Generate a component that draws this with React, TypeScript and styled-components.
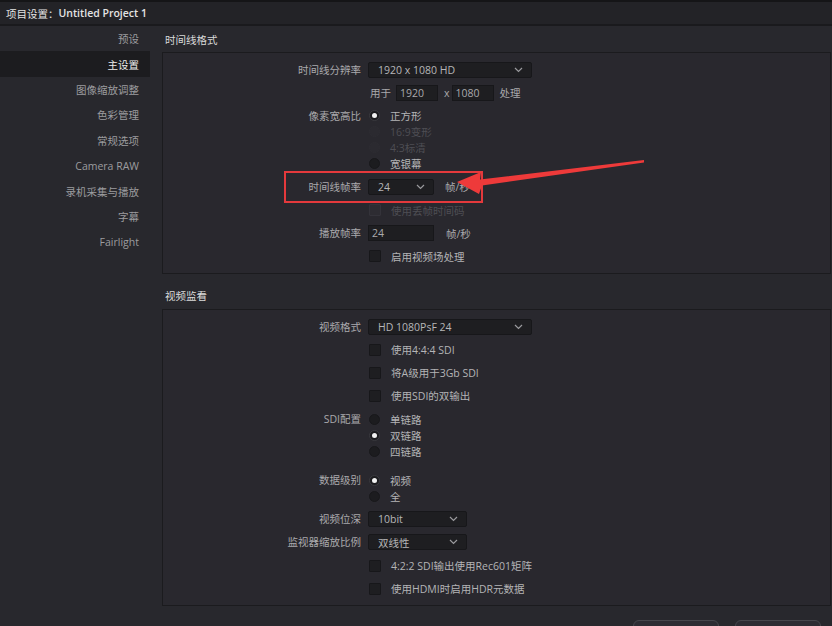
import styled, { createGlobalStyle } from "styled-components";

const GlobalStyle = createGlobalStyle`
  html, body {
    margin: 0;
    padding: 0;
    background: #28282d;
  }
  * {
    box-sizing: border-box;
  }
`;

const FONT = `"Open Sans", "Noto Sans CJK SC", "Noto Sans", sans-serif`;

const navItems = [
  "预设",
  "主设置",
  "图像缩放调整",
  "色彩管理",
  "常规选项",
  "Camera RAW",
  "录机采集与播放",
  "字幕",
  "Fairlight",
];

function Chevron() {
  return (
    <svg width="9" height="6" viewBox="0 0 9 6">
      <path d="M1 1 L4.5 4.5 L8 1" fill="none" stroke="#9a9a9e" strokeWidth="1.2" />
    </svg>
  );
}

function Select({ value, width }: { value: string; width: number }) {
  return (
    <SelectBox $width={width}>
      <span>{value}</span>
      <Chevron />
    </SelectBox>
  );
}

function Radio({ checked, disabled, label }: { checked?: boolean; disabled?: boolean; label: string }) {
  return (
    <OptionRow>
      <RadioDot $checked={checked} $disabled={disabled} />
      <OptionText $disabled={disabled}>{label}</OptionText>
    </OptionRow>
  );
}

function CheckRow({ label, disabled }: { label: string; disabled?: boolean }) {
  return (
    <Row>
      <Label />
      <OptionRow>
        <CheckBox $disabled={disabled} />
        <OptionText $disabled={disabled}>{label}</OptionText>
      </OptionRow>
    </Row>
  );
}

function App() {
  return (
    <Window>
      <GlobalStyle />
      <TitleBar>
        <TitlePrefix>项目设置：</TitlePrefix>Untitled Project 1
      </TitleBar>
      <Body>
        <Sidebar>
          {navItems.map((item) => (
            <NavItem key={item} $active={item === "主设置"}>
              {item}
            </NavItem>
          ))}
        </Sidebar>

        <Main>
          <SectionTitle>时间线格式</SectionTitle>
          <Panel>
            <Row>
              <Label>时间线分辨率</Label>
              <Select value="1920 x 1080 HD" width={164} />
            </Row>
            <Row>
              <Label />
              <Inline>
                <Text>用于</Text>
                <Field $width={42} $ml={5}>1920</Field>
                <Text $ml={6}>x</Text>
                <Field $width={42} $ml={2}>1080</Field>
                <Text $ml={6}>处理</Text>
              </Inline>
            </Row>
            <Group>
              <Label>像素宽高比</Label>
              <Options>
                <Radio checked label="正方形" />
                <Radio disabled label="16:9变形" />
                <Radio disabled label="4:3标清" />
                <Radio label="宽银幕" />
              </Options>
            </Group>
            <Row>
              <Label>时间线帧率</Label>
              <Select value="24" width={66} />
              <Text $ml={11}>帧/秒</Text>
            </Row>
            <CheckRow label="使用丢帧时间码" disabled />
            <Row>
              <Label>播放帧率</Label>
              <Field $width={66}>24</Field>
              <Text $ml={12}>帧/秒</Text>
            </Row>
            <CheckRow label="启用视频场处理" />
          </Panel>

          <SectionTitle $spaced>视频监看</SectionTitle>
          <Panel>
            <Row>
              <Label>视频格式</Label>
              <Select value="HD 1080PsF 24" width={164} />
            </Row>
            <CheckRow label="使用4:4:4 SDI" />
            <CheckRow label="将A级用于3Gb SDI" />
            <CheckRow label="使用SDI的双输出" />
            <Group>
              <Label>SDI配置</Label>
              <Options>
                <Radio label="单链路" />
                <Radio checked label="双链路" />
                <Radio label="四链路" />
              </Options>
            </Group>
            <Group $spaced>
              <Label>数据级别</Label>
              <Options>
                <Radio checked label="视频" />
                <Radio label="全" />
              </Options>
            </Group>
            <Row>
              <Label>视频位深</Label>
              <Select value="10bit" width={99} />
            </Row>
            <Row>
              <Label>监视器缩放比例</Label>
              <Select value="双线性" width={99} />
            </Row>
            <CheckRow label="4:2:2 SDI输出使用Rec601矩阵" />
            <CheckRow label="使用HDMI时启用HDR元数据" />
          </Panel>

          <Footer>
            <FooterButton />
            <FooterButton />
          </Footer>
        </Main>
      </Body>

      <Highlight />
      <Arrow width="832" height="626" viewBox="0 0 832 626">
        <polygon
          points="457,182 481,172 480,179.5 644,160 644,162.5 482,185.5 479,194"
          fill="#ee3a3a"
        />
      </Arrow>
    </Window>
  );
}

const Window = styled.div`
  position: relative;
  width: 832px;
  height: 626px;
  overflow: hidden;
  display: flex;
  flex-direction: column;
  background: #28282d;
  border-top: 2px solid #151517;
  font-family: ${FONT};
`;

const TitleBar = styled.div`
  height: 24px;
  flex-shrink: 0;
  display: flex;
  align-items: center;
  padding-left: 6px;
  background: #232327;
  border-bottom: 2px solid #1a1a1d;
  color: #e4e4e4;
  font-size: 10.5px;
  font-weight: 600;
`;

const TitlePrefix = styled.span`
  font-weight: 400;
`;

const Body = styled.div`
  flex: 1;
  display: flex;
  min-height: 0;
`;

const Sidebar = styled.div`
  width: 150px;
  flex-shrink: 0;
  display: flex;
  flex-direction: column;
`;

const NavItem = styled.div<{ $active?: boolean }>`
  height: 25.4px;
  display: flex;
  align-items: center;
  justify-content: flex-end;
  padding-right: 11px;
  font-size: 10.5px;
  color: ${(p) => (p.$active ? "#ececec" : "#9c9c9f")};
  background: ${(p) => (p.$active ? "#1c1c1f" : "transparent")};
`;

const Main = styled.div`
  flex: 1;
  display: flex;
  flex-direction: column;
  margin-left: 12px;
  margin-right: 1px;
`;

const SectionTitle = styled.div<{ $spaced?: boolean }>`
  height: 26px;
  flex-shrink: 0;
  display: flex;
  align-items: center;
  padding-left: 3px;
  margin-top: ${(p) => (p.$spaced ? "9px" : "0")};
  font-size: 10.5px;
  color: #dadada;
`;

const Panel = styled.div`
  flex-shrink: 0;
  border: 1px solid #1b1b1e;
  background: #29282e;
  padding: 5px 0 5px;
  display: flex;
  flex-direction: column;
`;

const Row = styled.div`
  height: 23.15px;
  display: flex;
  align-items: center;
`;

const Group = styled.div<{ $spaced?: boolean }>`
  display: flex;
  align-items: flex-start;
  padding: 3.55px 0;
  margin-top: ${(p) => (p.$spaced ? "6px" : "0")};
`;

const Label = styled.div`
  width: 198px;
  flex-shrink: 0;
  margin-right: 7px;
  height: 16px;
  line-height: 16px;
  text-align: right;
  font-size: 10.5px;
  color: #a9a9ac;
  white-space: nowrap;
`;

const Options = styled.div`
  display: flex;
  flex-direction: column;
`;

const OptionRow = styled.div`
  height: 16px;
  display: flex;
  align-items: center;
  padding-left: 1px;
`;

const OptionText = styled.span<{ $disabled?: boolean }>`
  margin-left: 10px;
  font-size: 10.5px;
  color: ${(p) => (p.$disabled ? "#4e4e54" : "#b4b4b6")};
  white-space: nowrap;
`;

const RadioDot = styled.span<{ $checked?: boolean; $disabled?: boolean }>`
  width: 11px;
  height: 11px;
  border-radius: 50%;
  flex-shrink: 0;
  display: flex;
  align-items: center;
  justify-content: center;
  background: ${(p) => (p.$disabled ? "#2b2a30" : "#1c1c1f")};
  border: 1px solid ${(p) => (p.$disabled ? "#2d2c32" : p.$checked ? "#3a3a3f" : "#18181b")};

  &::after {
    content: "";
    width: 5px;
    height: 5px;
    border-radius: 50%;
    background: #f2f2f2;
    display: ${(p) => (p.$checked ? "block" : "none")};
  }
`;

const CheckBox = styled.span<{ $disabled?: boolean }>`
  width: 12px;
  height: 12px;
  flex-shrink: 0;
  border-radius: 1px;
  background: ${(p) => (p.$disabled ? "#2d2c32" : "#1e1e21")};
  border: 1px solid ${(p) => (p.$disabled ? "#34333a" : "#17171a")};
`;

const SelectBox = styled.div<{ $width: number }>`
  width: ${(p) => p.$width}px;
  height: 16px;
  flex-shrink: 0;
  display: flex;
  align-items: center;
  justify-content: space-between;
  padding: 0 8px 0 9px;
  background: #1e1e21;
  border: 1px solid #17171a;
  border-radius: 2px;
  font-size: 10.5px;
  color: #b6b6b8;
`;

const Field = styled.div<{ $width: number; $ml?: number }>`
  width: ${(p) => p.$width}px;
  height: 16px;
  flex-shrink: 0;
  margin-left: ${(p) => p.$ml ?? 0}px;
  display: flex;
  align-items: center;
  padding-left: 3px;
  background: #1e1e21;
  border: 1px solid #17171a;
  font-size: 10.5px;
  color: #a9a9ac;
`;

const Inline = styled.div`
  display: flex;
  align-items: center;
  padding-left: 2px;
`;

const Text = styled.span<{ $ml?: number }>`
  margin-left: ${(p) => p.$ml ?? 0}px;
  font-size: 10.5px;
  color: #a9a9ac;
  white-space: nowrap;
`;

const Footer = styled.div`
  display: flex;
  justify-content: flex-end;
  gap: 16px;
  padding: 14px 10px 0 0;
`;

const FooterButton = styled.div`
  width: 86px;
  height: 24px;
  border-radius: 6px;
  border: 1px solid #46464c;
  background: #2d2c33;
`;

const Highlight = styled.div`
  position: absolute;
  left: 284px;
  top: 169px;
  width: 199px;
  height: 32px;
  border: 2px solid #e4393c;
  pointer-events: none;
`;

const Arrow = styled.svg`
  position: absolute;
  left: 0;
  top: -2px;
  pointer-events: none;
`;

export default App;
